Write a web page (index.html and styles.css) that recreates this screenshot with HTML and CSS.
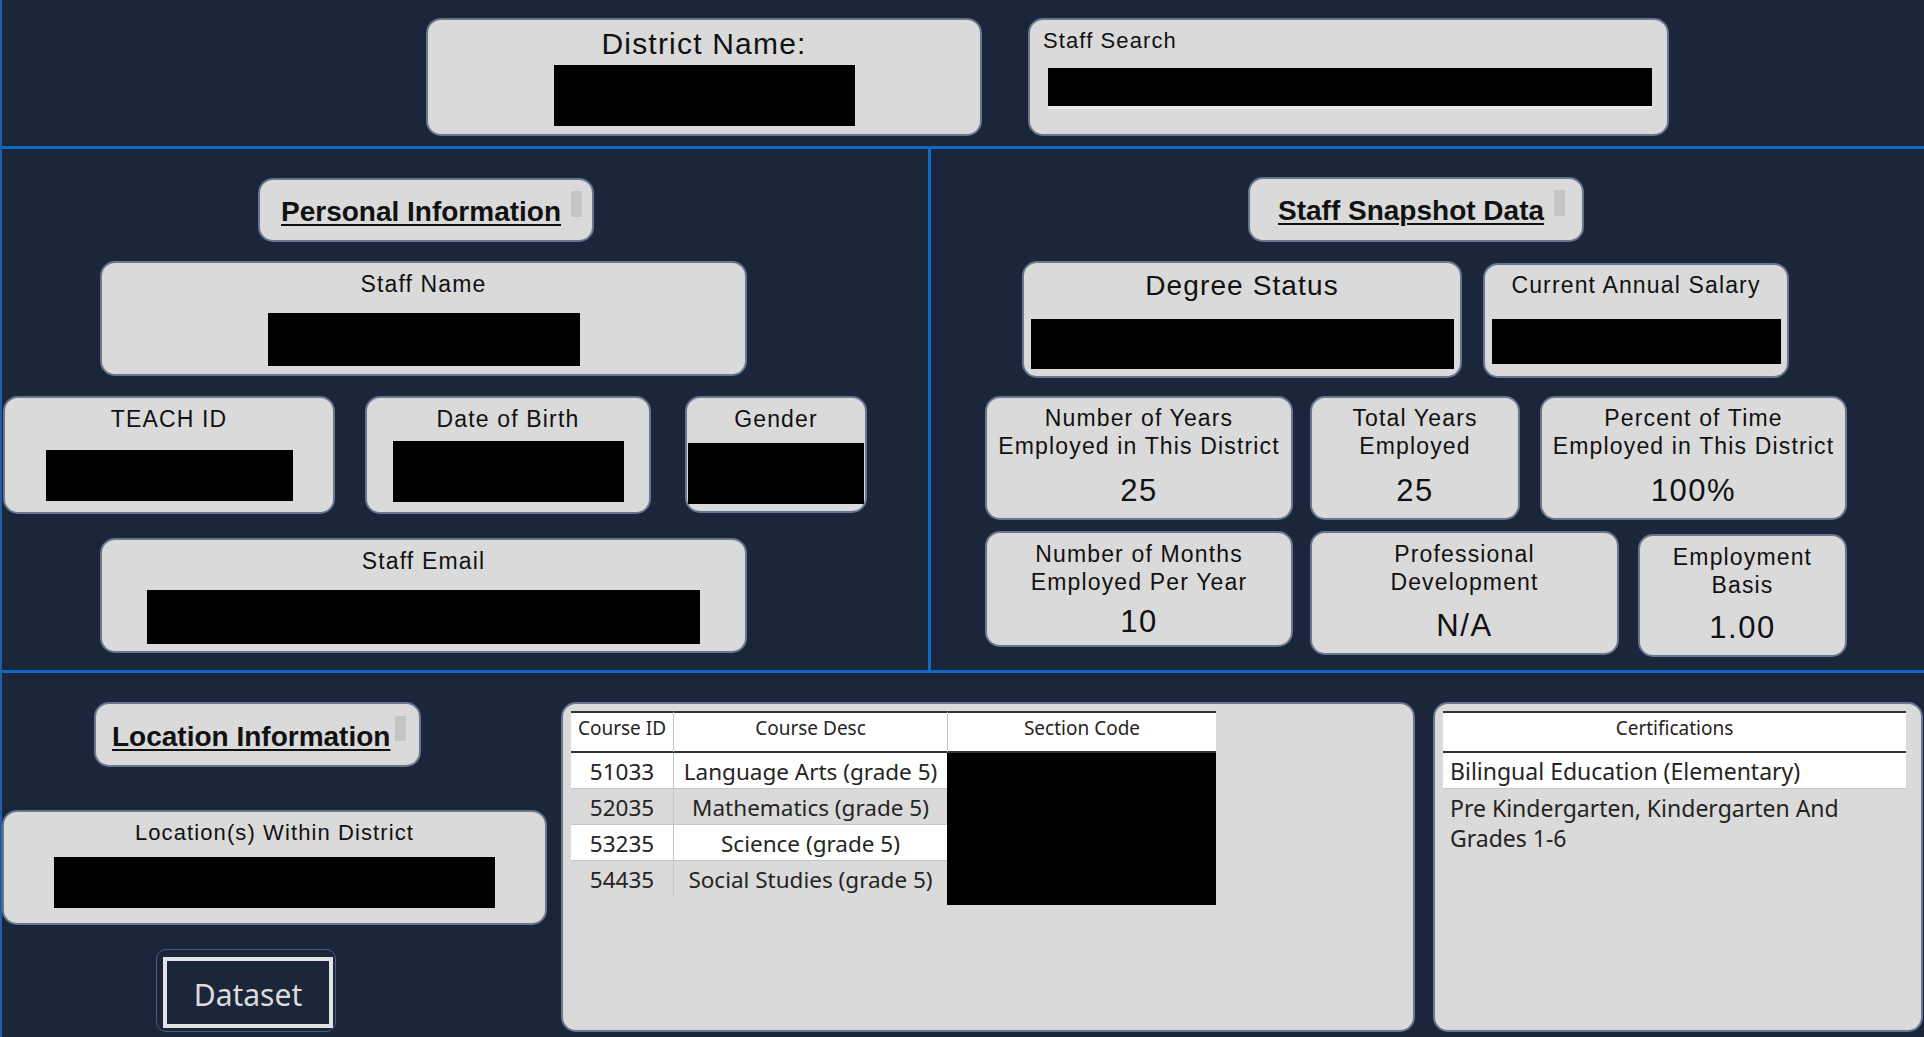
FILE: index.html
```html
<!DOCTYPE html>
<html lang="en">
    <head>
<meta charset="UTF-8">
<meta name="viewport" content="width=device-width, initial-scale=1.0">
<title>Staff Report</title>
<link rel="stylesheet" href="styles.css">
    </head>
   <body>
    <div class="page">
        <div class="top">
            <div class="card district">
                <div class="label-lg">District Name:</div>
                <div class="redact r-district"></div>
            </div>
            <div class="card search">
                <div class="label-sm">Staff Search</div>
                <div class="search-bar"></div>
            </div>
        </div>

        <div class="middle">
            <div class="pane-left">
                <div class="card section-head head-personal">
                    <span class="title">Personal Information</span>
                    <span class="scroll"></span>
                </div>
                <div class="card info staff-name">
                    <div class="label">Staff Name</div>
                    <div class="redact r-name"></div>
                </div>
                <div class="info-row">
                    <div class="card info teach-id">
                        <div class="label">TEACH ID</div>
                        <div class="redact r-teach"></div>
                    </div>
                    <div class="card info dob">
                        <div class="label">Date of Birth</div>
                        <div class="redact r-dob"></div>
                    </div>
                    <div class="card info gender">
                        <div class="label">Gender</div>
                        <div class="redact r-gender"></div>
                    </div>
                </div>
                <div class="card info staff-email">
                    <div class="label">Staff Email</div>
                    <div class="redact r-email"></div>
                </div>
            </div>

            <div class="pane-right">
                <div class="card section-head head-snapshot">
                    <span class="title">Staff Snapshot Data</span>
                    <span class="scroll"></span>
                </div>
                <div class="stat-row row-a">
                    <div class="card info degree">
                        <div class="label-lg">Degree Status</div>
                        <div class="redact r-degree"></div>
                    </div>
                    <div class="card info salary">
                        <div class="label">Current Annual Salary</div>
                        <div class="redact r-salary"></div>
                    </div>
                </div>
                <div class="stat-row row-b">
                    <div class="card stat s-years">
                        <div class="label">Number of Years<br>Employed in This District</div>
                        <div class="value">25</div>
                    </div>
                    <div class="card stat s-total">
                        <div class="label">Total Years<br>Employed</div>
                        <div class="value">25</div>
                    </div>
                    <div class="card stat s-percent">
                        <div class="label">Percent of Time<br>Employed in This District</div>
                        <div class="value">100%</div>
                    </div>
                </div>
                <div class="stat-row row-c">
                    <div class="card stat s-months">
                        <div class="label">Number of Months<br>Employed Per Year</div>
                        <div class="value">10</div>
                    </div>
                    <div class="card stat s-prof">
                        <div class="label">Professional<br>Development</div>
                        <div class="value">N/A</div>
                    </div>
                    <div class="card stat s-basis">
                        <div class="label">Employment<br>Basis</div>
                        <div class="value">1.00</div>
                    </div>
                </div>
            </div>
        </div>

        <div class="bottom">
            <div class="pane-location">
                <div class="card section-head head-location">
                    <span class="title">Location Information</span>
                    <span class="scroll"></span>
                </div>
                <div class="card info location">
                    <div class="label-md">Location(s) Within District</div>
                    <div class="redact r-location"></div>
                </div>
                <div class="dataset">
                    <div class="dataset-inner">Dataset</div>
                </div>
            </div>

            <div class="card table-card courses">
                <div class="tbl tbl-courses">
                    <div class="th">Course ID</div>
                    <div class="th sep">Course Desc</div>
                    <div class="th sep">Section Code</div>

                    <div class="td light">51033</div>
                    <div class="td light sep">Language Arts (grade 5)</div>
                    <div class="td hidden"></div>

                    <div class="td">52035</div>
                    <div class="td sep">Mathematics (grade 5)</div>
                    <div class="td hidden"></div>

                    <div class="td light">53235</div>
                    <div class="td light sep">Science (grade 5)</div>
                    <div class="td hidden"></div>

                    <div class="td last">54435</div>
                    <div class="td last sep">Social Studies (grade 5)</div>
                    <div class="td hidden last"></div>

                    <div></div>
                    <div></div>
                    <div class="hidden tail"></div>
                </div>
            </div>

            <div class="card table-card certs">
                <div class="tbl tbl-certs">
                    <div class="th">Certifications</div>
                    <div class="td light left">Bilingual Education (Elementary)</div>
                    <div class="td left wrap last">Pre Kindergarten, Kindergarten And Grades 1-6</div>
                </div>
            </div>
        </div>
    </div>
</body>
</html>
```
FILE: styles.css
```css
*{
    box-sizing: border-box;
}
body{
    margin: 0;
    background-color: #1b263a;
    font-family: "Liberation Sans", Arial, sans-serif;
    color: #111;
}
.page{
    width: 1924px;
    height: 1037px;
    overflow: hidden;
    border-left: 2px solid #1f5ea6;
}
.card{
    background-color: #dadada;
    border: 2px solid #66778f;
    border-radius: 15px;
}
.redact{
    background-color: #000;
    margin: 0 auto;
}
.label, .label-sm, .label-md, .label-lg{
    letter-spacing: 0.05em;
}
.label{
    font-size: 23px;
    line-height: 28px;
}
.label-sm{
    font-size: 22px;
    line-height: 26px;
}
.label-md{
    font-size: 22px;
    line-height: 26px;
}
.label-lg{
    font-size: 29px;
    line-height: 34px;
    letter-spacing: 0.04em;
}

/* top strip */
.top{
    display: flex;
    align-items: flex-start;
    height: 149px;
    padding: 18px 0 0 424px;
    border-bottom: 3px solid #0f69c9;
}
.district{
    width: 556px;
    height: 118px;
    padding-top: 6px;
    text-align: center;
}
.district .label-lg{
    font-size: 30px;
    line-height: 36px;
}
.r-district{ width: 301px; height: 61px; margin-top: 3px; }
.search{
    width: 641px;
    height: 118px;
    margin-left: 46px;
    padding: 8px 0 0 13px;
}
.search-bar{
    width: 604px;
    height: 41px;
    margin: 14px 0 0 5px;
    background-color: #000;
    border-bottom: 3px solid #ebebeb;
}

/* middle */
.middle{
    display: flex;
    height: 524px;
    border-bottom: 3px solid #0f69c9;
}
.pane-left{
    width: 926px;
}
.pane-right{
    width: 996px;
    border-left: 3px solid #0f69c9;
}
.section-head{
    display: flex;
    align-items: flex-start;
    width: 336px;
    height: 64px;
    padding-left: 21px;
}
.section-head .title{
    font-weight: bold;
    font-size: 28px;
    line-height: 32px;
    padding-top: 16px;
    text-decoration: underline;
    text-decoration-thickness: 2px;
    text-underline-offset: 3px;
}
.section-head .scroll{
    width: 11px;
    height: 26px;
    margin: 11px 0 0 10px;
    background-color: #c4c4c4;
}
.head-personal{ margin: 29px 0 0 256px; }
.head-snapshot{ margin: 28px 0 0 317px; height: 65px; padding-left: 28px; }
.head-location{ margin: 29px 0 0 92px; width: 327px; height: 65px; padding-left: 16px; }
.head-location .title{ padding-top: 17px; }
.head-location .scroll{ margin: 12px 0 0 5px; height: 25px; }

.info{
    text-align: center;
    padding-top: 7px;
}
.staff-name{ width: 647px; height: 115px; margin: 19px 0 0 98px; }
.r-name{ width: 312px; height: 53px; margin-top: 15px; }
.info-row{
    display: flex;
    align-items: flex-start;
    margin-top: 20px;
}
.teach-id{ width: 332px; height: 118px; margin-left: 1px; }
.r-teach{ width: 247px; height: 51px; margin-top: 17px; }
.dob{ width: 286px; height: 118px; margin-left: 30px; }
.r-dob{ width: 231px; height: 61px; margin-top: 8px; }
.gender{ width: 182px; height: 117px; margin-left: 34px; }
.r-gender{ width: 176px; height: 61px; margin-top: 10px; }
.staff-email{ width: 647px; height: 115px; margin: 24px 0 0 98px; padding-top: 7px; }
.r-email{ width: 553px; height: 54px; margin-top: 15px; }

/* snapshot stats */
.stat-row{
    display: flex;
    align-items: flex-start;
}
.row-a{ margin-top: 19px; padding-left: 91px; }
.degree{ width: 440px; height: 117px; padding-top: 6px; }
.degree .label-lg{ font-size: 28px; }
.r-degree{ width: 423px; height: 50px; margin-top: 16px; }
.salary{ width: 306px; height: 115px; margin: 2px 0 0 21px; padding-top: 6px; }
.r-salary{ width: 289px; height: 45px; margin-top: 20px; }

.stat{
    text-align: center;
    padding-top: 6px;
}
.stat .value{
    font-size: 31px;
    line-height: 36px;
    letter-spacing: 0.05em;
}
.row-b{ margin-top: 18px; padding-left: 54px; }
.row-b .stat{ height: 124px; }
.row-b .value{ margin-top: 13px; }
.s-years{ width: 308px; }
.s-total{ width: 210px; margin-left: 17px; }
.s-percent{ width: 307px; margin-left: 20px; }
.row-c{ margin-top: 11px; padding-left: 54px; }
.row-c .stat{ padding-top: 7px; }
.s-months{ width: 308px; height: 116px; }
.s-months .value{ margin-top: 8px; }
.s-prof{ width: 309px; height: 124px; margin-left: 17px; }
.s-prof .value{ margin-top: 12px; }
.s-basis{ width: 209px; height: 123px; margin: 3px 0 0 19px; }
.s-basis .value{ margin-top: 11px; }

/* bottom */
.bottom{
    display: flex;
    align-items: flex-start;
}
.pane-location{
    width: 545px;
}
.location{ width: 545px; height: 115px; margin-top: 43px; padding-top: 8px; }
.r-location{ width: 441px; height: 51px; margin-top: 11px; }
.dataset{
    width: 180px;
    height: 83px;
    margin: 24px 0 0 154px;
    padding: 7px 2px 3px 6px;
    border: 1px solid #4a5f80;
    border-radius: 10px;
}
.dataset-inner{
    height: 100%;
    display: flex;
    align-items: center;
    justify-content: center;
    padding-top: 4px;
    border: 4px solid #e3e3e3;
    color: #dcdcdc;
    font-family: "Noto Sans", sans-serif;
    font-size: 30px;
    line-height: 36px;
}

.table-card{
    height: 330px;
    margin-top: 29px;
    padding: 7px 0 0 8px;
}
.courses{ width: 854px; margin-left: 14px; }
.certs{ width: 490px; margin-left: 18px; }
.tbl{
    display: grid;
    font-family: "Noto Sans", sans-serif;
    color: #252423;
}
.tbl-courses{ grid-template-columns: 102px 274px 269px; }
.tbl-certs{ grid-template-columns: 463px; }
.th{
    height: 42px;
    padding-top: 3px;
    background-color: #fff;
    border-top: 2px solid #333;
    border-bottom: 2px solid #333;
    font-size: 19px;
    line-height: 24px;
    text-align: center;
}
.td{
    height: 36px;
    padding-top: 2px;
    border-bottom: 1px solid #c6c6c6;
    font-size: 22.5px;
    line-height: 33px;
    text-align: center;
    white-space: nowrap;
}
.td.last{
    border-bottom: none;
}
.light{
    background-color: #fff;
}
.sep{
    border-left: 1px solid #c6c6c6;
}
.hidden{
    background-color: #000;
    border-bottom: none;
}
.tail{
    height: 8px;
}
.left{
    text-align: left;
    padding-left: 7px;
}
.tbl-certs .td{
    font-size: 23px;
}
.wrap{
    height: auto;
    padding: 4px 30px 0 7px;
    line-height: 30px;
    white-space: normal;
}
```
